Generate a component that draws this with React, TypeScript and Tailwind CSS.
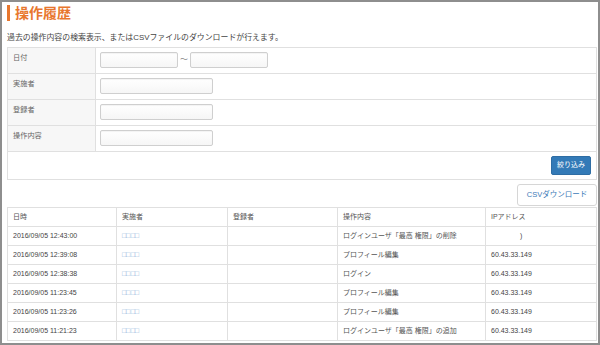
const font = { fontFamily: '"Liberation Sans", "Noto Sans CJK JP", sans-serif' };

const rows = [
  { date: "2016/09/05 12:43:00", op: "ログインユーザ「最高 権限」の削除", ip: ")" },
  { date: "2016/09/05 12:39:08", op: "プロフィール編集", ip: "60.43.33.149" },
  { date: "2016/09/05 12:38:38", op: "ログイン", ip: "60.43.33.149" },
  { date: "2016/09/05 11:23:45", op: "プロフィール編集", ip: "60.43.33.149" },
  { date: "2016/09/05 11:23:26", op: "プロフィール編集", ip: "60.43.33.149" },
  { date: "2016/09/05 11:21:23", op: "ログインユーザ「最高 権限」の追加", ip: "60.43.33.149" },
];

function Input({ w }: { w: string }) {
  return (
    <div
      className={`${w} h-[16px] rounded-[2px] border border-[#cfcfcf] bg-gradient-to-b from-white to-[#f6f6f6] shadow-[inset_0_1px_1px_rgba(0,0,0,0.05)]`}
    />
  );
}

function FormRow({ label, children }: { label: string; children: React.ReactNode }) {
  return (
    <div className="flex h-[26px] border-b border-[#e0e0e0]">
      <div className="w-[88px] shrink-0 border-r border-[#e0e0e0] bg-[#f7f7f7] pl-[5px] pt-[6px] text-[7.2px] leading-none text-[#666]">
        {label}
      </div>
      <div className="flex items-center gap-[2px] pl-[4px]">{children}</div>
    </div>
  );
}

const cols = ["w-[109px]", "w-[111px]", "w-[110px]", "w-[148px]", "flex-1"];

export default function App() {
  return (
    <div style={font} className="h-[345px] w-[600px] overflow-hidden border-2 border-[#8e8e8e] bg-white">
      <div className="flex h-full flex-col pl-[5px] pr-[1px]">
        <div className="mt-[3px] flex h-[16px] items-center">
          <div className="h-[16px] w-[3px] bg-[#e8772e]" />
          <h1 className="ml-[5px] text-[14px] font-bold leading-none text-[#e8772e]">操作履歴</h1>
        </div>
        <p className="mt-[13px] text-[7.9px] leading-none text-[#444]">
          過去の操作内容の検索表示、またはCSVファイルのダウンロードが行えます。
        </p>
        <div className="mt-[5px] border border-[#e0e0e0]">
          <FormRow label="日付">
            <Input w="w-[78px]" />
            <span className="text-[8px] text-[#888]">〜</span>
            <Input w="w-[78px]" />
          </FormRow>
          <FormRow label="実施者">
            <Input w="w-[113px]" />
          </FormRow>
          <FormRow label="登録者">
            <Input w="w-[113px]" />
          </FormRow>
          <FormRow label="操作内容">
            <Input w="w-[113px]" />
          </FormRow>
          <div className="flex h-[27px] items-center justify-end pr-[5px]">
            <button className="h-[19px] w-[40px] rounded-[2px] border border-[#2e6da4] bg-[#337ab7] text-[7px] text-white">
              絞り込み
            </button>
          </div>
        </div>
        <div className="mt-[4px] flex justify-end">
          <button className="h-[22px] w-[80px] rounded-[3px] border border-[#d6d6d6] bg-white text-[7.5px] text-[#3d7ab8]">
            CSVダウンロード
          </button>
        </div>
        <div className="mt-[1px] border border-b-0 border-[#e0e0e0] text-[7px] text-[#555]">
          <div className="flex h-[19px] border-b border-[#e0e0e0]">
            {["日時", "実施者", "登録者", "操作内容", "IPアドレス"].map((h, i) => (
              <div key={h} className={`${cols[i]} flex items-center pl-[5px] ${i < 4 ? "border-r border-[#e0e0e0]" : ""}`}>
                {h}
              </div>
            ))}
          </div>
          {rows.map((r, idx) => (
            <div key={idx} className="flex h-[19px] border-b border-[#e0e0e0]">
              <div className={`${cols[0]} flex items-center border-r border-[#e0e0e0] pl-[5px] text-[#444]`}>{r.date}</div>
              <div className={`${cols[1]} flex items-center border-r border-[#e0e0e0] pl-[5px] text-[7.5px] tracking-[-0.8px] text-[#8fb3d9]`}>
                □□ □□
              </div>
              <div className={`${cols[2]} border-r border-[#e0e0e0]`} />
              <div className={`${cols[3]} flex items-center border-r border-[#e0e0e0] pl-[5px]`}>{r.op}</div>
              <div className={`${cols[4]} flex items-center text-[#444] ${r.ip === ")" ? "pl-[34px]" : "pl-[5px]"}`}>{r.ip}</div>
            </div>
          ))}
        </div>
      </div>
    </div>
  );
}
